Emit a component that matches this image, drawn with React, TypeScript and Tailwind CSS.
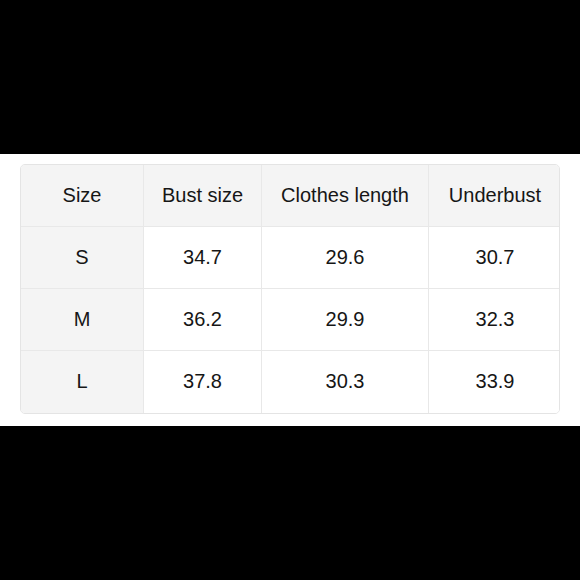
import React from 'react';

const headers = ['Size', 'Bust size', 'Clothes length', 'Underbust'];

const rows = [
  ['S', '34.7', '29.6', '30.7'],
  ['M', '36.2', '29.9', '32.3'],
  ['L', '37.8', '30.3', '33.9'],
];

const App = () => {
  return (
    <div className="w-[580px] h-[580px] bg-black flex flex-col" style={{ fontFamily: '"Liberation Sans", Arial, sans-serif' }}>
      <div className="h-[154px]" />

      {/* size chart */}
      <div className="h-[272px] bg-white px-[20px] pt-[10px]">
        <div className="grid grid-cols-[123px_118px_167px_132px] border border-[#e4e4e4] rounded-[5px] overflow-hidden text-[20px] text-[#161616]">
          {headers.map((h, i) => (
            <div
              key={h}
              className={`h-[62px] pb-[2px] flex items-center justify-center bg-[#f4f4f4] border-b border-[#e8e8e8] ${i < 3 ? 'border-r' : ''}`}
            >
              {h}
            </div>
          ))}
          {rows.map((r, ri) =>
            r.map((c, ci) => (
              <div
                key={`${ri}-${ci}`}
                className={`h-[62px] pb-[2px] flex items-center justify-center border-[#e8e8e8] ${ci === 0 ? 'bg-[#f4f4f4]' : 'bg-white'} ${ci < 3 ? 'border-r' : ''} ${ri < 2 ? 'border-b' : ''}`}
              >
                {c}
              </div>
            ))
          )}
        </div>
      </div>

      <div className="flex-1" />
    </div>
  );
};

export default App;
